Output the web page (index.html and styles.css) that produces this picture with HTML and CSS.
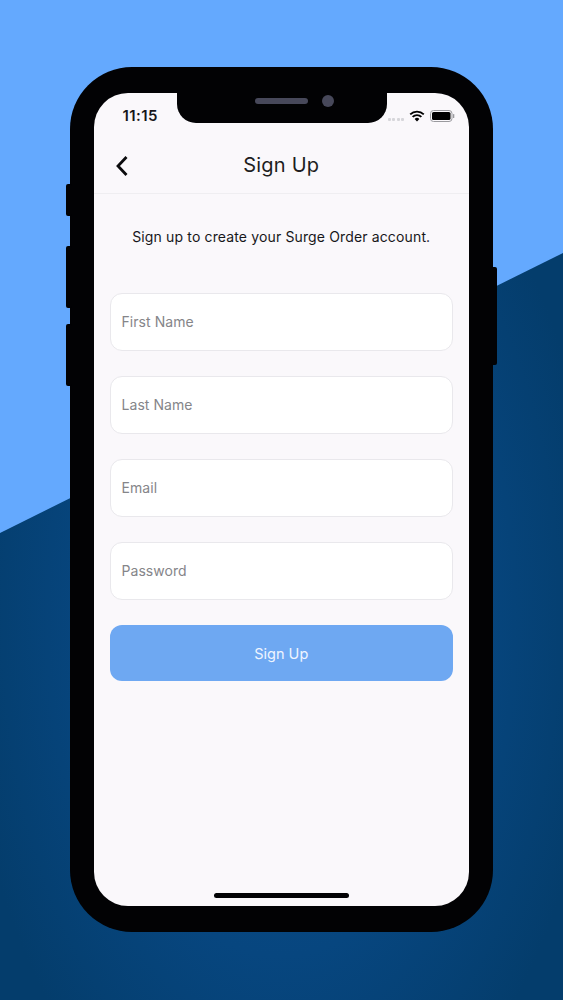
FILE: index.html
```html
<!DOCTYPE html>
<html lang="en">
<head>
<meta charset="utf-8">
<title>Sign Up</title>
<link rel="stylesheet" href="styles.css">
</head>
<body>
<div class="backdrop"></div>
<div class="phone">
  <span class="side side-mute"></span>
  <span class="side side-up"></span>
  <span class="side side-down"></span>
  <span class="side side-power"></span>
  <div class="screen">
    <div class="notch"><span class="speaker"></span><span class="camera"></span></div>
    <div class="status">
      <span class="time">11:15</span>
      <span class="status-icons">
        <span class="signal"><i></i><i></i><i></i><i></i></span>
        <svg class="wifi" width="16" height="12" viewBox="0 0 16 12"><path d="M8 11.500 5.600 8.900a3.400 3.400 0 0 1 4.800 0Z" fill="#000"/><path d="M3.600 6.900a6.200 6.200 0 0 1 8.800 0M1.200 4.400a9.600 9.600 0 0 1 13.600 0" fill="none" stroke="#000" stroke-width="1.800"/></svg>
        <svg class="battery" width="25" height="12" viewBox="0 0 25 12"><rect x=".5" y=".5" width="21.500" height="11" rx="3" fill="none" stroke="#9a9a9e"/><rect x="2" y="2" width="18.500" height="8" rx="1.600" fill="#000"/><rect x="23" y="4" width="1.300" height="4" rx=".6" fill="#9a9a9e"/></svg>
      </span>
    </div>
    <header class="nav">
      <svg class="back" width="14" height="22" viewBox="0 0 14 22"><path d="M11.500 2 3 11l8.500 9" fill="none" stroke="#0b0b0d" stroke-width="2.800"/></svg>
      <h1>Sign Up</h1>
    </header>
    <p class="intro">Sign up to create your Surge Order account.</p>
    <form class="form">
      <div class="field">First Name</div>
      <div class="field">Last Name</div>
      <div class="field">Email</div>
      <div class="field">Password</div>
      <div class="submit">Sign Up</div>
    </form>
    <div class="home"></div>
  </div>
</div>
</body>
</html>
```
FILE: styles.css
```css
* { box-sizing: border-box; }
html, body { margin: 0; height: 1000px; overflow: hidden; }
body {
  position: relative;
  background: #64a9fe;
  font-family: Inter, "Liberation Sans", sans-serif;
  padding: 67px 70px 0;
}
.backdrop {
  position: absolute;
  inset: 0;
  background: radial-gradient(ellipse 320px 560px at 50% 62%, #0a4f8f 0%, #07467f 60%, #043d6c 100%);
  clip-path: polygon(0 533px, 563px 253px, 563px 1000px, 0 1000px);
}
.phone {
  position: relative;
  width: 423px;
  height: 865px;
  background: #020204;
  border-radius: 62px;
  padding: 26px 24px 26px 23.500px;
}
.side { position: absolute; background: #020204; width: 6px; border-radius: 2px; }
.side-mute { left: -4px; top: 117px; height: 32px; }
.side-up { left: -4px; top: 179px; height: 62px; }
.side-down { left: -4px; top: 257px; height: 62px; }
.side-power { right: -4px; top: 200px; height: 98px; }
.screen {
  position: relative;
  height: 813px;
  background: #faf8fb;
  border-radius: 34px;
  overflow: hidden;
  display: flex;
  flex-direction: column;
}
.notch {
  position: absolute;
  top: 0;
  left: 83.500px;
  width: 210px;
  height: 29.500px;
  background: #020204;
  border-radius: 0 0 19px 19px;
  display: flex;
  justify-content: center;
  align-items: center;
  gap: 14px;
  padding: 0 0 13px 24px;
}
.speaker { width: 53px; height: 6px; border-radius: 3px; background: #47485a; }
.camera { width: 12px; height: 12px; border-radius: 50%; background: #47485a; }
.status {
  height: 31px;
  display: flex;
  justify-content: space-between;
  align-items: flex-end;
  padding: 0 14px 0 29px;
  flex: none;
}
.time { font-size: 15px; font-weight: 600; color: #17171a; line-height: 17px; letter-spacing: .4px; }
.status-icons { display: flex; align-items: center; gap: 5px; margin-bottom: 2px; }
.signal { display: flex; gap: 1.500px; align-self: flex-end; margin-bottom: 1px; }
.signal i { width: 3px; height: 3px; border-radius: 1px; background: #d6d6da; }
.nav {
  position: relative;
  height: 69.500px;
  flex: none;
  border-bottom: 1px solid #efeef1;
  display: flex;
  align-items: center;
  justify-content: center;
  padding-top: 14px;
}
.back { position: absolute; left: 21px; top: 31px; }
.nav h1 { margin: 0; font-size: 20px; font-weight: 400; color: #1d1d20; letter-spacing: .2px; line-height: 28px; }
.intro {
  margin: 33px 0 0;
  text-align: center;
  font-size: 14px;
  letter-spacing: .14px;
  line-height: 20px;
  color: #17171a;
}
.form {
  display: flex;
  flex-direction: column;
  gap: 25px;
  padding: 46px 16px 0;
}
.field {
  height: 58px;
  background: #fff;
  border: 1px solid #e9e8ec;
  border-radius: 12px;
  display: flex;
  align-items: center;
  padding-left: 11px;
  font-size: 14px;
  letter-spacing: .05px;
  color: #858589;
}
.submit {
  height: 56px;
  border-radius: 12px;
  background: #6ea8f2;
  color: #eef5ff;
  font-size: 14.500px;
  padding-top: 1px;
  display: flex;
  align-items: center;
  justify-content: center;
}
.home {
  position: absolute;
  left: 120px;
  bottom: 8px;
  width: 135px;
  height: 5px;
  border-radius: 3px;
  background: #020204;
}
```
